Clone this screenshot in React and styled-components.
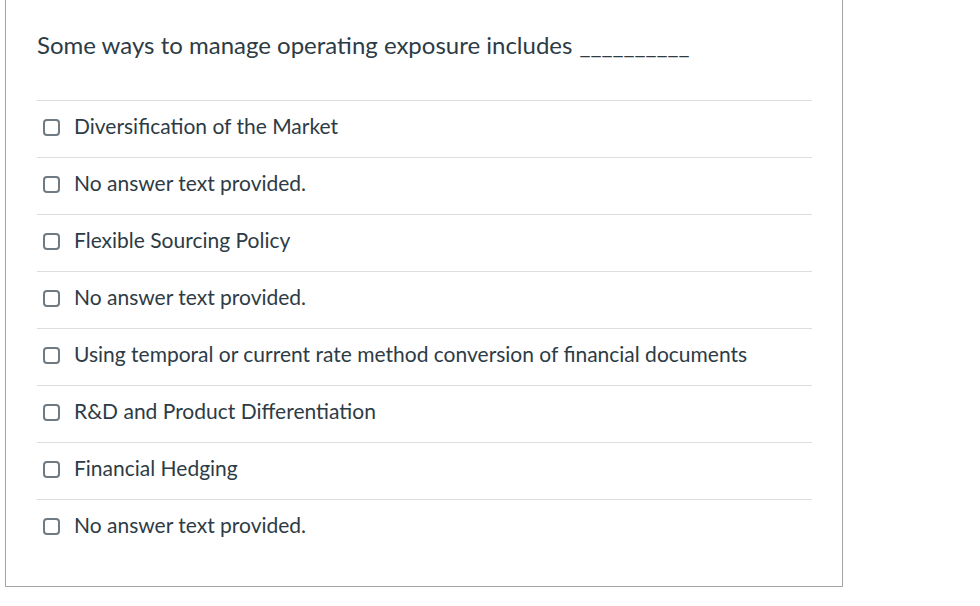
import React from 'react';
import styled, { createGlobalStyle } from 'styled-components';

const Global = createGlobalStyle`
  html, body {
    margin: 0;
    padding: 0;
    background: #fff;
  }
  body {
    font-family: Lato, "Open Sans", sans-serif;
    color: #2d3b45;
  }
`;

const Page = styled.div`
  padding-left: 5px;
  width: 980px;
  height: 606px;
  box-sizing: border-box;
`;

const Card = styled.div`
  width: 838px;
  height: 587px;
  box-sizing: border-box;
  border: 1px solid #a5a5a5;
  border-top: none;
  padding: 0 30px 0 31px;
  display: flex;
  flex-direction: column;
`;

const Question = styled.div`
  height: 100px;
  display: flex;
  align-items: center;
  padding-bottom: 12px;
  box-sizing: border-box;
  font-size: 24px;
  color: #2d3b45;
`;

const Blank = styled.span`
  margin-left: 7px;
`;

const Answers = styled.div`
  display: flex;
  flex-direction: column;
`;

const Row = styled.label`
  height: 57px;
  border-top: 1px solid #dddddd;
  display: flex;
  align-items: center;
  gap: 14px;
  padding-left: 6px;
  box-sizing: border-box;
  font-size: 21px;
  color: #2d3b45;
  padding-bottom: 7px;
`;

const Box = styled.span`
  width: 17px;
  height: 17px;
  box-sizing: border-box;
  border: 2px solid #6f7a82;
  border-radius: 4px;
  flex: none;
  background: #fff;
  margin-top: 4px;
`;

const answers = [
  'Diversification of the Market',
  'No answer text provided.',
  'Flexible Sourcing Policy',
  'No answer text provided.',
  'Using temporal or current rate method conversion of financial documents',
  'R&D and Product Differentiation',
  'Financial Hedging',
  'No answer text provided.',
];

export default function App() {
  return (
    <Page>
      <Global />
      <Card>
        <Question>
          Some ways to manage operating exposure includes
          <Blank>__________</Blank>
        </Question>
        <Answers>
          {answers.map((a, i) => (
            <Row key={i}>
              <Box />
              {a}
            </Row>
          ))}
        </Answers>
      </Card>
    </Page>
  );
}
